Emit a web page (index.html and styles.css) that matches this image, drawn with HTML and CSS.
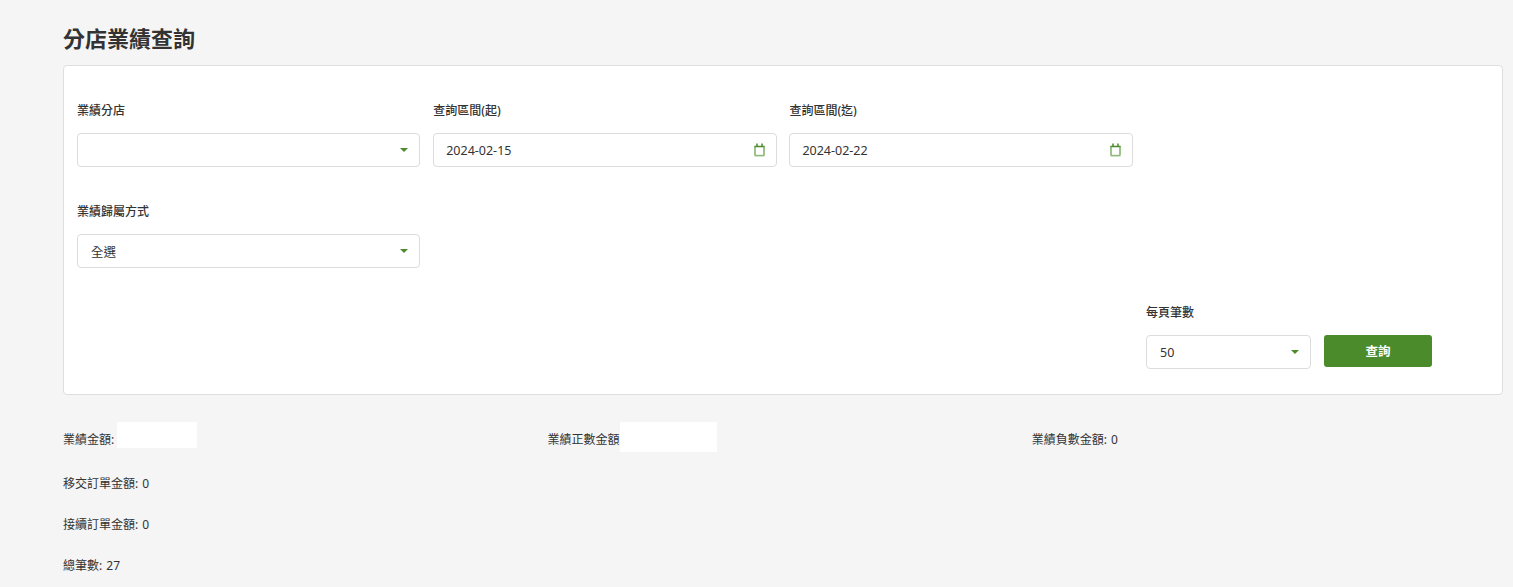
FILE: index.html
```html
<!DOCTYPE html>
<html lang="zh-Hant">
<head>
  <meta charset="UTF-8" />
  <meta name="viewport" content="width=device-width, initial-scale=1.0" />
  <title>分店業績查詢</title>
  <link rel="stylesheet" href="styles.css">
</head>
<body>
  <h1 class="page-title">分店業績查詢</h1>

  <form class="search-card">
    <div class="form-row">
      <div class="field">
        <label>業績分店</label>
        <div class="control">
          <span class="value"></span>
          <span class="caret"></span>
        </div>
      </div>
      <div class="field">
        <label>查詢區間(起)</label>
        <div class="control control-date">
          <span class="value">2024-02-15</span>
          <svg class="cal-icon" viewBox="0 0 11 14" aria-hidden="true">
            <path class="cal-top" d="M3 0.5v3M8 0.5v3M0.5 3.6h10" />
            <path d="M1 3v9M10 3v9" />
            <path class="cal-foot" d="M0.5 12.6h10" />
          </svg>
        </div>
      </div>
      <div class="field">
        <label>查詢區間(迄)</label>
        <div class="control control-date">
          <span class="value">2024-02-22</span>
          <svg class="cal-icon" viewBox="0 0 11 14" aria-hidden="true">
            <path class="cal-top" d="M3 0.5v3M8 0.5v3M0.5 3.6h10" />
            <path d="M1 3v9M10 3v9" />
            <path class="cal-foot" d="M0.5 12.6h10" />
          </svg>
        </div>
      </div>
    </div>

    <div class="form-row">
      <div class="field">
        <label>業績歸屬方式</label>
        <div class="control">
          <span class="value">全選</span>
          <span class="caret"></span>
        </div>
      </div>
    </div>

    <div class="form-row form-row-end">
      <div class="field field-small">
        <label>每頁筆數</label>
        <div class="control">
          <span class="value">50</span>
          <span class="caret"></span>
        </div>
      </div>
      <button type="button" class="btn-search">查詢</button>
    </div>
  </form>

  <div class="stats-top">
    <div class="stat">業績金額:<span class="mask mask-a"></span></div>
    <div class="stat">業績正數金額<span class="mask mask-b"></span></div>
    <div class="stat">業績負數金額: 0</div>
  </div>
  <div class="stat stat-line">移交訂單金額: 0</div>
  <div class="stat stat-line">接續訂單金額: 0</div>
  <div class="stat stat-line">總筆數: 27</div>
</body>
</html>
```

FILE: styles.css
```css
* {
  box-sizing: border-box;
}
body {
  margin: 0;
  padding: 0 10px 0 63px;
  background: #f5f5f5;
  font-family: "Noto Sans", "Noto Sans CJK TC", sans-serif;
  font-size: 12px;
  color: #333;
  height: 587px;
  overflow: hidden;
}
.page-title {
  margin: 0;
  height: 65px;
  padding-top: 22px;
  font-size: 22px;
  line-height: 32px;
  font-weight: 700;
  color: #333;
}
.search-card {
  height: 330px;
  padding: 32px 0 0 13px;
  background: #fff;
  border: 1px solid #dedede;
  border-radius: 4px;
}
.form-row {
  display: flex;
  height: 101px;
}
.form-row-end {
  padding-left: 1069px;
  align-items: flex-start;
}
.field {
  width: 356.2px;
  padding-right: 12.8px;
}
.field-small {
  width: 178px;
}
.field label {
  display: block;
  height: 35px;
  padding-top: 4px;
  line-height: 18px;
  font-size: 12px;
  font-weight: 500;
  color: #333;
}
.control {
  display: flex;
  align-items: center;
  justify-content: space-between;
  height: 34px;
  padding: 0 11px 0 13px;
  border: 1px solid #dcdcdc;
  border-radius: 4px;
  background: #fff;
  font-size: 12.5px;
  color: #333;
}
.control-date {
  padding: 0 11px 0 12px;
}
.caret {
  width: 0;
  height: 0;
  border-left: 4px solid transparent;
  border-right: 4px solid transparent;
  border-top: 4px solid #4b8b2b;
}
.cal-icon {
  width: 11px;
  height: 14px;
  fill: none;
  stroke: #5d9a3f;
  stroke-width: 1.2;
}
.cal-top {
  stroke: #4b8b2b;
  stroke-width: 1.5;
}
.cal-foot {
  stroke: #8fb87c;
  stroke-width: 1.6;
}
.btn-search {
  width: 108px;
  height: 32px;
  margin-top: 35px;
  padding-bottom: 2px;
  border: none;
  border-radius: 3px;
  background: #4b8b2b;
  color: #fff;
  font-family: inherit;
  font-size: 12.5px;
  font-weight: 700;
}
.stats-top {
  display: flex;
  height: 71px;
  padding-top: 27px;
}
.stat {
  padding-top: 1px;
  line-height: 34px;
  font-size: 12px;
  word-spacing: 1px;
  color: #333;
}
.stats-top .stat {
  display: flex;
  align-items: flex-start;
  flex: none;
  width: 484.4px;
}
.mask {
  display: block;
  margin-top: -1px;
  margin-left: 3px;
  background: #fff;
}
.mask-a {
  width: 80px;
  height: 26px;
}
.mask-b {
  width: 97px;
  height: 30px;
  margin-left: 1px;
}
.stat-line {
  height: 41px;
}
```
